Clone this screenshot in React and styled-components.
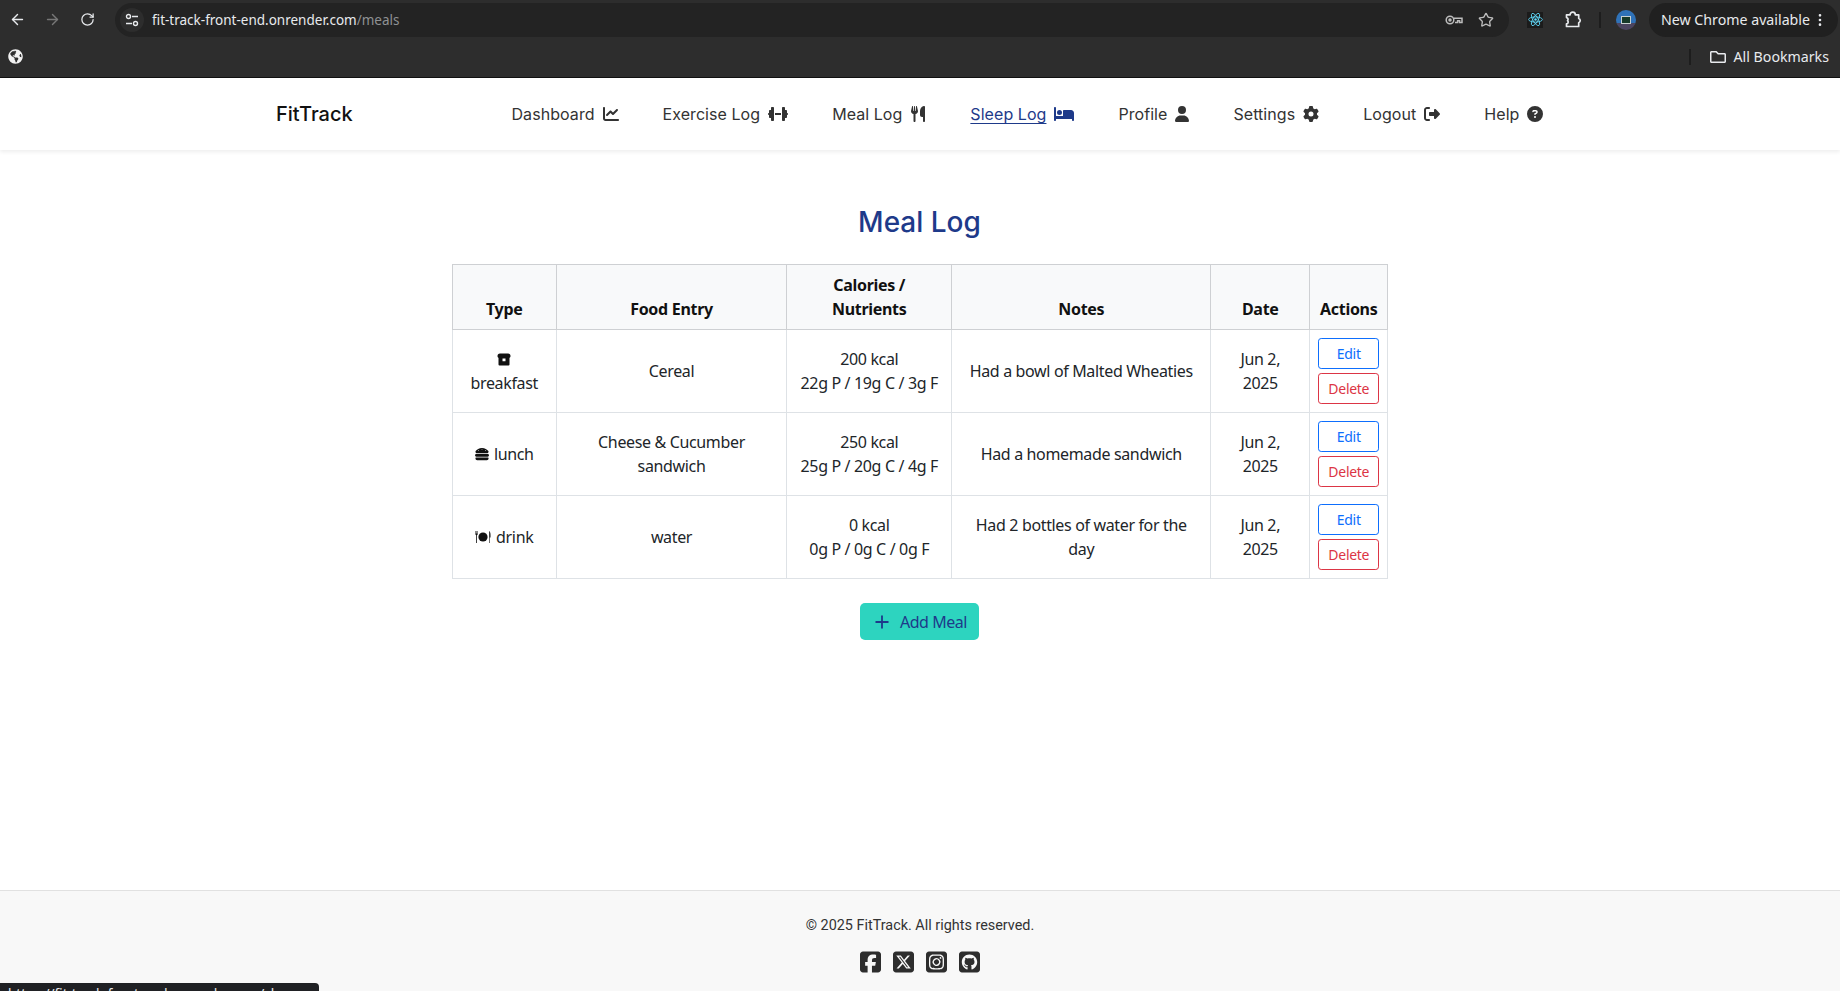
import React from 'react';
import styled, { createGlobalStyle } from 'styled-components';
import { FaHamburger, FaGlobeAmericas, FaRegFolder } from 'react-icons/fa';
import { FaChartLine, FaDumbbell, FaUtensils, FaBed, FaUser, FaGear, FaRightFromBracket, FaCircleQuestion, FaSquareFacebook, FaSquareXTwitter, FaSquareInstagram, FaSquareGithub } from 'react-icons/fa6';
import { ArrowLeft, ArrowRight, RotateCw, Star, Plus, EllipsisVertical } from 'lucide-react';

const Global = createGlobalStyle`
  html, body { margin: 0; padding: 0; height: 100%; overflow: hidden; background: #fff; }
  * { box-sizing: border-box; }
`;
const Page = styled.div`
  height: 991px; display: flex; flex-direction: column; overflow: hidden; position: relative;
`;
const Browser = styled.div`
  height: 78px; flex: none; background: #2d2d2d; border-bottom: 1px solid #111;
  font-family: "Noto Sans", sans-serif; color: #e8eaed;
`;
const ToolRow = styled.div`
  height: 39px; display: flex; align-items: center; padding: 0 2px 0 0;
`;
const NavBtn = styled.div`
  width: 35px; height: 36px; flex: none; display: flex; align-items: center; justify-content: center;
  color: ${p => p.$dim ? '#777' : '#e8eaed'};
`;
const Omnibox = styled.div`
  margin-left: 10px; width: 1394px; height: 34px; border-radius: 17px; background: #232323; flex: none;
  display: flex; align-items: center; padding: 0 8px 0 5px; font-size: 13.5px;
`;
const TuneBadge = styled.div`
  width: 24px; height: 24px; border-radius: 50%; background: #2d2d2d; display: flex; align-items: center; justify-content: center; margin-right: 8px;
`;
const UrlMain = styled.span` color: #e8eaed; `;
const UrlPath = styled.span` color: #8f9193; `;
const OmniEnd = styled.div`
  margin-left: auto; display: flex; align-items: center; gap: 15px; padding-right: 7px; color: #bdbdbd;
`;
const Ext = styled.div`
  display: flex; align-items: center; justify-content: center; width: 16px; height: 16px; background: #1b1b1b; margin-left: 18px; flex: none;
`;
const PuzzleBox = styled.div` margin-left: 21px; display: flex; color: #e8eaed; `;
const Divider = styled.div` width: 2px; height: 16px; background: #1d1d1d; margin-left: 17px; `;
const Avatar = styled.div`
  width: 20px; height: 20px; border-radius: 50%; margin-left: 15px; flex: none; overflow: hidden;
  background: linear-gradient(#2f72b8 65%, #4b4560 65%); display: flex; align-items: center; justify-content: center;
`;
const AvatarScreen = styled.div` width: 10px; height: 8px; background: #173a2a; border: 1px solid #c8d0d0; `;
const Update = styled.div`
  margin-left: 13px; height: 34px; flex: 1; border-radius: 17px; background: #202020; display: flex; align-items: center;
  padding-left: 12px; font-size: 14.2px; white-space: nowrap;
`;
const BookRow = styled.div`
  height: 35px; display: flex; align-items: center; padding: 0 11px 0 8px; font-size: 14.2px;
`;
const BookSep = styled.div` margin-left: auto; width: 2px; height: 16px; background: #1d1d1d; `;
const BookAll = styled.div` margin-left: 19px; display: flex; align-items: center; gap: 8px; `;
const Nav = styled.nav`
  height: 72px; flex: none; background: #fff; box-shadow: 0 2px 4px rgba(0,0,0,.07); display: flex; align-items: center;
  padding-left: 276px; position: relative;
`;
const Brand = styled.a`
  font-family: Inter, sans-serif; font-size: 20px; font-weight: 500; color: #111; width: 235.500px; flex: none;
`;
const NavList = styled.div` display: flex; gap: 44px; `;
const NavItem = styled.a`
  display: flex; align-items: center; gap: 8px; font-size: 16px; white-space: nowrap; letter-spacing: .06px;
  font-family: Inter, sans-serif; font-weight: 400;
  color: ${p => p.$active ? '#1e3a8a' : '#333'};
  span { text-decoration: ${p => p.$active ? 'underline' : 'none'}; text-underline-offset: 3px; }
`;
const NavIcon = styled.i`
  display: flex; flex: none;
  svg { height: 16px; width: ${p => p.$w}px; }
`;
const Main = styled.main`
  flex: 1; display: flex; flex-direction: column; align-items: center; padding-top: 55px;
`;
const Title = styled.h1`
  font-family: Inter, sans-serif; font-size: 28px; font-weight: 500; line-height: 34px; color: #1e3a8a; margin: 0 1px 25px 0;
`;
const Table = styled.table`
  width: 935.5px; table-layout: fixed; border-collapse: collapse; font-family: "Noto Sans", sans-serif; font-size: 16px; line-height: 24px; color: #212529; letter-spacing: -0.35px;
`;
const Th = styled.th`
  border: 1px solid #ced0d3; background: #f8f9fa; padding: 8px 6px; text-align: center; vertical-align: bottom; font-weight: 700; color: #111; letter-spacing: -0.3px;
`;
const Td = styled.td`
  border: 1px solid #dee2e6; padding: 8px; text-align: center; vertical-align: middle; height: 83px;
`;
const TypeIcon = styled.span`
  display: inline-flex; vertical-align: -1px; margin-right: ${p => p.$block ? 0 : '5px'}; color: #111; font-size: 14px;
`;
const BtnStack = styled.div` display: flex; flex-direction: column; gap: 4px; `;
const SmallBtn = styled.button`
  height: 31px; width: 100%; padding: 0; border-radius: 3.2px; background: #fff; font-family: "Noto Sans", sans-serif; font-size: 14px; letter-spacing: -0.3px;
  border: 1px solid ${p => p.$danger ? '#dc3545' : '#0d6efd'}; color: ${p => p.$danger ? '#dc3545' : '#0d6efd'};
`;
const AddBtn = styled.button`
  margin: 24px 1px 0 0; width: 119px; height: 37px; border: 0; border-radius: 5px; background: #2dd4bf; color: #1e3a8a; display: flex; align-items: center; justify-content: center; gap: 8px;
  font-family: "Noto Sans", sans-serif; font-size: 16px; letter-spacing: -0.45px;
`;
const Footer = styled.footer`
  height: 101px; flex: none; background: #f8f8f8; border-top: 1px solid #e1e1e1; display: flex; flex-direction: column; align-items: center; padding-top: 24px;
  font-family: Roboto, sans-serif; font-size: 14.4px; color: #333;
`;
const Copy = styled.p` margin: 0 0 14px; line-height: 21px; `;
const Socials = styled.div` display: flex; gap: 12px; color: #2d2d2d; svg { display: block; height: 24px; width: 21px; } `;
const Status = styled.div`
  position: absolute; left: 0; top: 983px; width: 319px; height: 24px; background: #202124; border-radius: 0 4px 0 0;
  color: #e8eaed; font-family: "Noto Sans", sans-serif; font-size: 13.5px; line-height: 16px; padding: 3px 0 0 8px; white-space: nowrap; overflow: hidden;
`;

const TuneIcon = () => (
  <svg width="14" height="14" viewBox="0 0 14 14" fill="none" stroke="currentColor" strokeWidth="1.4">
    <circle cx="3.5" cy="3.5" r="2" /><path d="M7 3.5h6M1 10.5h6" /><circle cx="10.5" cy="10.5" r="2" />
  </svg>
);
const KeyIcon = () => (
  <svg width="18" height="12" viewBox="0 0 18 12" fill="none" stroke="currentColor" strokeWidth="1.5">
    <circle cx="5" cy="6" r="3.8" /><circle cx="5" cy="6" r="1" fill="currentColor" />
    <path d="M9 4.2h8v4.2h-2.4V6.8h-2v1.6H10" />
  </svg>
);
const ReactIcon = () => (
  <svg width="15" height="15" viewBox="-12 -12 24 24" fill="none" stroke="#61dafb" strokeWidth="1.4">
    <circle r="2" fill="#61dafb" stroke="none" />
    <ellipse rx="11" ry="4.2" /><ellipse rx="11" ry="4.2" transform="rotate(60)" /><ellipse rx="11" ry="4.2" transform="rotate(120)" />
  </svg>
);
const PuzzleIcon = () => (
  <svg width="18" height="18" viewBox="0 0 18 18" fill="none" stroke="currentColor" strokeWidth="1.7" strokeLinejoin="round">
    <path d="M2.5 3.8h3.6a2.6 2.6 0 0 1 5.2 0h3.4v3.7a2.2 2.2 0 0 1 0 4.2v3.8H2.5v-2.6a1.8 1.8 0 0 0 1-3.2 1.8 1.8 0 0 0-1-3.1z" />
  </svg>
);
const BreadIcon = () => (
  <svg width="14" height="13" viewBox="0 0 14 13">
    <path fill="currentColor" fillRule="evenodd" d="M3 .5h8A2.500 2.500 0 0 1 13.500 3c0 1-.5 1.600-1 1.900V11.500a1 1 0 0 1-1 1h-9a1 1 0 0 1-1-1V4.900C1 4.600.5 4 .5 3A2.500 2.500 0 0 1 3 .5zM5.500 5.500v2.800h3V5.500z" />
  </svg>
);
const PlateIcon = () => (
  <svg width="16" height="14" viewBox="0 0 16 14" fill="currentColor">
    <circle cx="8" cy="7" r="4.6" />
    <path d="M.4 1h.5v2.600h.4V1h.5v2.600h.4V1h.5v3.400l-.7.8V13H1.200V5.200L.4 4.400z" />
    <path d="M14.200 1c.9.6 1.300 2 1.300 4v2.400h-.7V13h-.6z" />
  </svg>
);

const navs = [
  ['Dashboard', FaChartLine, 16], ['Exercise Log', FaDumbbell, 20], ['Meal Log', FaUtensils, 16], ['Sleep Log', FaBed, 20, true],
  ['Profile', FaUser, 14], ['Settings', FaGear, 16], ['Logout', FaRightFromBracket, 16], ['Help', FaCircleQuestion, 16],
];
const rows = [
  { icon: <BreadIcon />, block: true, type: 'breakfast', food: 'Cereal', kcal: '200 kcal', mac: '22g P / 19g C / 3g F', notes: 'Had a bowl of Malted Wheaties' },
  { icon: <FaHamburger />, type: 'lunch', food: <>Cheese &amp; Cucumber<br />sandwich</>, kcal: '250 kcal', mac: '25g P / 20g C / 4g F', notes: 'Had a homemade sandwich' },
  { icon: <PlateIcon />, type: 'drink', food: 'water', kcal: '0 kcal', mac: '0g P / 0g C / 0g F', notes: <>Had 2 bottles of water for the<br />day</> },
];
const widths = [104, 230.5, 165, 259, 99, 78];

export default function App() {
  return (
    <Page>
      <Global />
      <Browser>
        <ToolRow>
          <NavBtn><ArrowLeft size={17} strokeWidth={2} /></NavBtn>
          <NavBtn $dim><ArrowRight size={17} strokeWidth={2} /></NavBtn>
          <NavBtn><RotateCw size={15} strokeWidth={2} /></NavBtn>
          <Omnibox>
            <TuneBadge><TuneIcon /></TuneBadge>
            <UrlMain>fit-track-front-end.onrender.com</UrlMain><UrlPath>/meals</UrlPath>
            <OmniEnd><KeyIcon /><Star size={16} /></OmniEnd>
          </Omnibox>
          <Ext><ReactIcon /></Ext>
          <PuzzleBox><PuzzleIcon /></PuzzleBox>
          <Divider />
          <Avatar><AvatarScreen /></Avatar>
          <Update>New Chrome available<EllipsisVertical size={16} style={{ marginLeft: 2 }} /></Update>
        </ToolRow>
        <BookRow>
          <FaGlobeAmericas size={15} color="#f1f1f1" />
          <BookSep />
          <BookAll><FaRegFolder size={16} />All Bookmarks</BookAll>
        </BookRow>
      </Browser>
      <Nav>
        <Brand>FitTrack</Brand>
        <NavList>
          {navs.map(([label, Icon, w, active]) => (
            <NavItem key={label} $active={active}><span>{label}</span><NavIcon $w={w}><Icon /></NavIcon></NavItem>
          ))}
        </NavList>
      </Nav>
      <Main>
        <Title>Meal Log</Title>
        <Table>
          <colgroup>{widths.map((w, i) => <col key={i} style={{ width: w }} />)}</colgroup>
          <thead>
            <tr>
              <Th>Type</Th><Th>Food Entry</Th><Th>Calories /<br />Nutrients</Th><Th>Notes</Th><Th>Date</Th><Th>Actions</Th>
            </tr>
          </thead>
          <tbody>
            {rows.map(r => (
              <tr key={r.type}>
                <Td>
                  <TypeIcon $block={r.block}>{r.icon}</TypeIcon>
                  {r.block && <br />}
                  {r.type}
                </Td>
                <Td>{r.food}</Td>
                <Td>{r.kcal}<br />{r.mac}</Td>
                <Td>{r.notes}</Td>
                <Td>Jun 2,<br />2025</Td>
                <Td>
                  <BtnStack>
                    <SmallBtn>Edit</SmallBtn>
                    <SmallBtn $danger>Delete</SmallBtn>
                  </BtnStack>
                </Td>
              </tr>
            ))}
          </tbody>
        </Table>
        <AddBtn><Plus size={20} strokeWidth={2.2} />Add Meal</AddBtn>
      </Main>
      <Footer>
        <Copy>© 2025 FitTrack. All rights reserved.</Copy>
        <Socials>
          <FaSquareFacebook /><FaSquareXTwitter /><FaSquareInstagram /><FaSquareGithub />
        </Socials>
      </Footer>
      <Status>https://fit-track-front-end.onrender.com/sleep</Status>
    </Page>
  );
}
